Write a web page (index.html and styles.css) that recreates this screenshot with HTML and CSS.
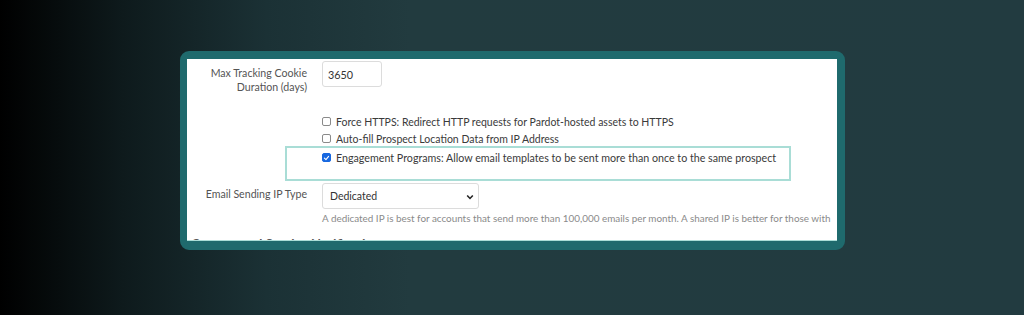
FILE: index.html
```html
<!DOCTYPE html>
<html>
<head>
    <meta charset="UTF-8">
    <link rel="stylesheet" href="styles.css">
</head>
<body>
    <div class="frame">
        <div class="sheet">
            <div class="row row-cookie">
                <div class="label">Max Tracking Cookie<br>Duration (days)</div>
                <div class="field"><div class="input">3650</div></div>
            </div>

            <div class="checks">
                <div class="check"><span class="box"></span>Force HTTPS: Redirect HTTP requests for Pardot-hosted assets to HTTPS</div>
                <div class="check"><span class="box"></span>Auto-fill Prospect Location Data from IP Address</div>
            </div>

            <div class="highlight">
                <div class="check"><span class="box checked"><svg viewBox="0 0 10 10" width="8" height="8"><path d="M2 5.2 L4.2 7.3 L8 2.6" fill="none" stroke="#fff" stroke-width="1.6" stroke-linecap="round" stroke-linejoin="round"/></svg></span>Engagement Programs: Allow email templates to be sent more than once to the same prospect</div>
            </div>

            <div class="row row-ip">
                <div class="label">Email Sending IP Type</div>
                <div class="field">
                    <div class="select">Dedicated
                        <svg class="chev" viewBox="0 0 10 10" width="8" height="8"><path d="M1.5 3.2 L5 6.8 L8.5 3.2" fill="none" stroke="#222" stroke-width="2"/></svg>
                    </div>
                    <div class="help">A dedicated IP is best for accounts that send more than 100,000 emails per month. A shared IP is better for those with</div>
                </div>
            </div>

            <div class="section">Content and Service Notifications</div>
        </div>
    </div>
</body>
</html>
```

FILE: styles.css
```css
body {
    margin: 0;
    height: 315px;
    overflow: hidden;
    background: linear-gradient(90deg, #000 0%, #0e1a1c 12%, #1b3135 26%, #223b3f 40%, #223b40 100%);
    font-family: 'Lato', 'Open Sans', sans-serif;
    padding-top: 51px;
    box-sizing: border-box;
}

.frame {
    width: 650px;
    margin-left: 180px;
    background: #1f6a6d;
    border-style: solid;
    border-color: #1f6a6d;
    border-width: 8px 8px 9px 7px;
    border-radius: 9px;
}

.sheet {
    height: 182px;
    background: #fff;
    overflow: hidden;
    border-bottom: 1px solid #a9ddd6;
    box-sizing: border-box;
    color: #3e3e3e;
    font-size: 10.5px;
}

.row {
    display: flex;
}

.label {
    width: 120px;
    text-align: right;
    color: #545454;
    line-height: 14px;
    font-size: 10.6px;
}

.field {
    margin-left: 15px;
}

.row-cookie {
    padding-top: 2px;
}

.row-cookie .label {
    padding-top: 5px;
}

.input {
    width: 60px;
    height: 26px;
    box-sizing: border-box;
    border: 1px solid #dcdcdc;
    border-radius: 3px;
    padding: 6px 0 0 5px;
    color: #333;
    font-size: 10.8px;
}

.checks {
    padding: 19px 0 0 135px;
}

.check {
    display: flex;
    align-items: center;
    height: 17px;
    color: #3a3a3a;
    white-space: nowrap;
}

.box {
    width: 9px;
    height: 9px;
    border: 1px solid #8a8a8a;
    border-radius: 2px;
    margin-right: 5px;
    box-sizing: border-box;
    display: flex;
    align-items: center;
    justify-content: center;
}

.box.checked {
    background: #1868e0;
    border-color: #1868e0;
}

.highlight {
    margin: -1px 0 0 98px;
    width: 506px;
    height: 35px;
    box-sizing: border-box;
    border: 2px solid #a9ddd6;
    padding: 1px 0 0 35px;
}

.highlight .check {
    font-size: 10.7px;
}

.row-ip {
    margin-top: 2px;
}

.row-ip .label {
    padding-top: 4px;
}

.select {
    width: 157px;
    height: 26px;
    box-sizing: border-box;
    border: 1px solid #dcdcdc;
    border-radius: 3px;
    padding: 6px 0 0 7px;
    color: #333;
    display: flex;
    justify-content: space-between;
}

.chev {
    margin: 3px 4px 0 0;
}

.help {
    font-size: 9.9px;
    color: #8a8a8a;
    margin-top: 3px;
    white-space: nowrap;
}

.section {
    margin: 11.5px 0 0 4px;
    font-size: 13px;
    font-weight: 700;
    color: #555;
}
```
